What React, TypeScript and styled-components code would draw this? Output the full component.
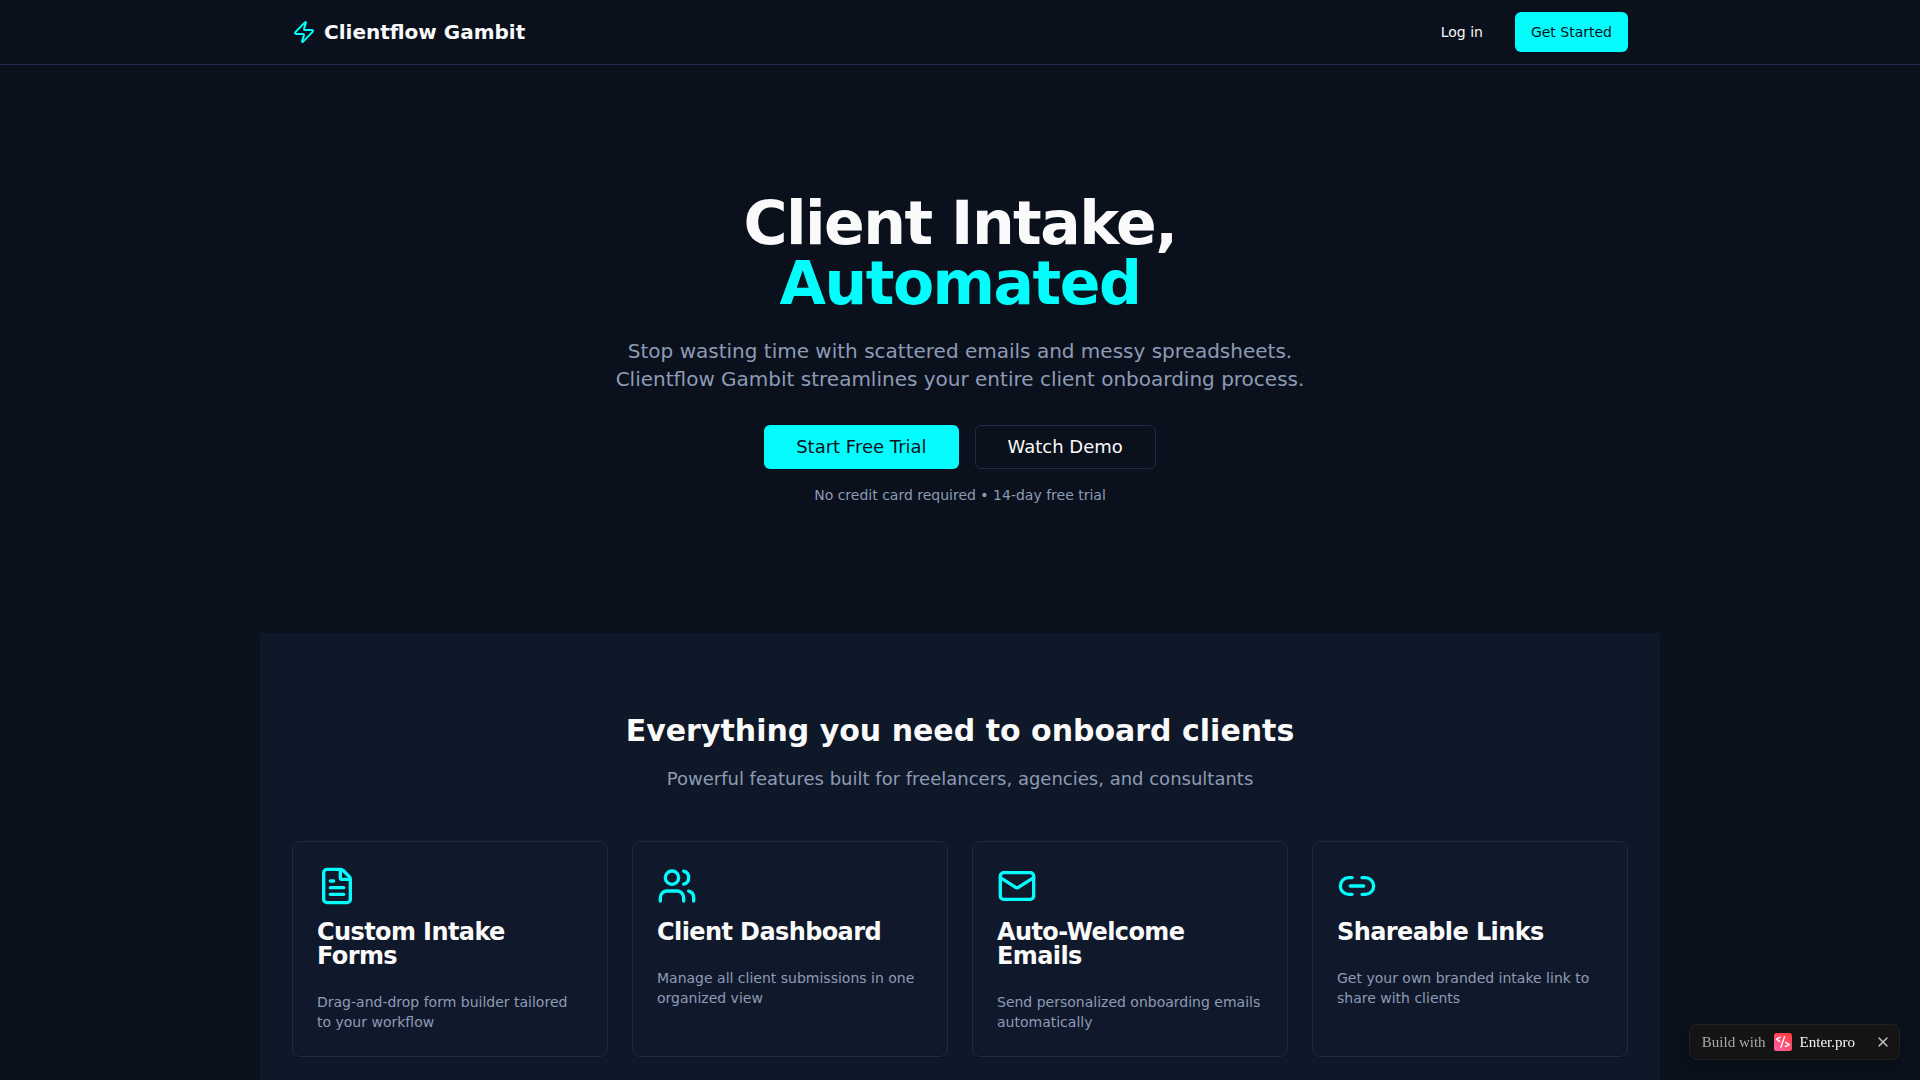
import React from "react";
import styled, { createGlobalStyle } from "styled-components";
import { Zap, FileText, Users, Mail, Link2, X } from "lucide-react";

const GlobalStyle = createGlobalStyle`
  *, *::before, *::after { box-sizing: border-box; }
  body {
    margin: 0;
    background: #0a111d;
    color: #fafafa;
    font-family: "DejaVu Sans", sans-serif;
    font-size: 16px;
    line-height: 24px;
    -webkit-font-smoothing: antialiased;
  }
  h1, h2, h3, p { margin: 0; }
`;

const Header = styled.header`
  border-bottom: 1px solid #1e2d4a;
`;

const Container = styled.div`
  max-width: 1400px;
  margin: 0 auto;
  padding: 0 32px;
`;

const Bar = styled(Container)`
  height: 64px;
  display: flex;
  align-items: center;
  justify-content: space-between;
`;

const Brand = styled.div`
  display: flex;
  align-items: center;
  gap: 8px;
  font-size: 20px;
  line-height: 28px;
  font-weight: 700;
  svg { color: #05fcfc; }
`;

const Actions = styled.nav`
  display: flex;
  align-items: center;
  gap: 16px;
`;

const Button = styled.button<{ $variant: "primary" | "ghost" | "outline"; $large?: boolean }>`
  height: ${(p) => (p.$large ? 44 : 40)}px;
  padding: 0 ${(p) => (p.$large ? 32 : 16)}px;
  font-family: inherit;
  font-size: ${(p) => (p.$large ? 18 : 14)}px;
  line-height: ${(p) => (p.$large ? 28 : 20)}px;
  font-weight: 500;
  border-radius: 6px;
  cursor: pointer;
  white-space: nowrap;
  border: ${(p) => (p.$variant === "outline" ? "1px solid #1e2b47" : "none")};
  background: ${(p) => (p.$variant === "primary" ? "#05fcfc" : "transparent")};
  color: ${(p) => (p.$variant === "primary" ? "#0a111d" : "#fafafa")};
`;

const Hero = styled(Container).attrs({ as: "section" })`
  padding-top: 128px;
  padding-bottom: 128px;
  text-align: center;
`;

const Title = styled.h1`
  font-size: 60px;
  line-height: 60px;
  font-weight: 700;
  letter-spacing: -0.025em;
  margin-bottom: 24px;
`;

const Accent = styled.span`
  display: block;
  color: #05fcfc;
`;

const Lead = styled.p`
  max-width: 720px;
  margin: 0 auto 32px;
  font-size: 20px;
  line-height: 28px;
  color: #8e9bb5;
`;

const HeroActions = styled.div`
  display: flex;
  justify-content: center;
  gap: 16px;
  margin-bottom: 16px;
`;

const Note = styled.p`
  font-size: 14px;
  line-height: 20px;
  color: #8e9bb5;
`;

const Features = styled(Container).attrs({ as: "section" })`
  padding-top: 80px;
  padding-bottom: 80px;
  background: #0f1828;
`;

const SectionHead = styled.div`
  text-align: center;
  margin-bottom: 48px;
`;

const SectionTitle = styled.h2`
  font-size: 30px;
  line-height: 36px;
  font-weight: 700;
  margin-bottom: 16px;
`;

const SectionText = styled.p`
  font-size: 18px;
  line-height: 28px;
  color: #8e9bb5;
`;

const Grid = styled.div`
  display: grid;
  grid-template-columns: repeat(4, minmax(0, 1fr));
  gap: 24px;
`;

const Card = styled.article`
  padding: 24px;
  border: 1px solid #1e2b47;
  border-radius: 8px;
  background: #10192b;
  box-shadow: 0 1px 2px rgba(0, 0, 0, 0.05);
  svg { display: block; color: #05fcfc; margin-bottom: 14px; }
`;

const CardTitle = styled.h3`
  font-size: 24px;
  line-height: 24px;
  font-weight: 600;
  letter-spacing: -0.025em;
  margin-bottom: 24px;
`;

const Badge = styled.aside`
  position: fixed;
  right: 20px;
  bottom: 20px;
  height: 36px;
  display: flex;
  align-items: center;
  gap: 8px;
  padding: 0 8px 0 12px;
  border: 1px solid #222222;
  border-radius: 8px;
  background: #141414;
  box-shadow: 0 4px 12px rgba(0, 0, 0, 0.2);
  color: #a8a8a8;
  font-family: "Liberation Serif", serif;
  font-size: 15px;
`;

const BadgeLink = styled.a`
  display: flex;
  align-items: center;
  gap: 8px;
  color: #f5f5f5;
  text-decoration: none;
`;

const Close = styled.button`
  display: flex;
  padding: 0;
  margin-left: 12px;
  border: 0;
  background: none;
  color: #c4c4c4;
  cursor: pointer;
`;

const EnterLogo = () => (
  <svg width="18" height="18" viewBox="0 0 18 18" fill="none" aria-hidden="true">
    <defs>
      <linearGradient id="enter-fill" x1="3" y1="18" x2="14" y2="0" gradientUnits="userSpaceOnUse">
        <stop stopColor="#ff5fa0" />
        <stop offset="1" stopColor="#ff3b3f" />
      </linearGradient>
    </defs>
    <rect width="18" height="18" rx="2.5" fill="url(#enter-fill)" />
    <path
      d="M6.2 4.2 2.4 6.2l3.5 2.4M10.6 3.6 7 14M11.6 9.3l3.8 2.4-4 1.8"
      stroke="#ffffff"
      strokeWidth="1.4"
      strokeLinecap="round"
      strokeLinejoin="round"
    />
  </svg>
);

const features = [
  { icon: FileText, title: "Custom Intake Forms", text: "Drag-and-drop form builder tailored to your workflow" },
  { icon: Users, title: "Client Dashboard", text: "Manage all client submissions in one organized view" },
  { icon: Mail, title: "Auto-Welcome Emails", text: "Send personalized onboarding emails automatically" },
  { icon: Link2, title: "Shareable Links", text: "Get your own branded intake link to share with clients" },
];

export default function App() {
  return (
    <>
      <GlobalStyle />
      <Header>
        <Bar>
          <Brand><Zap size={24} />Clientflow Gambit</Brand>
          <Actions>
            <Button $variant="ghost">Log in</Button>
            <Button $variant="primary">Get Started</Button>
          </Actions>
        </Bar>
      </Header>
      <main>
        <Hero>
          <Title>Client Intake,<Accent>Automated</Accent></Title>
          <Lead>
            Stop wasting time with scattered emails and messy spreadsheets. Clientflow Gambit
            streamlines your entire client onboarding process.
          </Lead>
          <HeroActions>
            <Button $variant="primary" $large>Start Free Trial</Button>
            <Button $variant="outline" $large>Watch Demo</Button>
          </HeroActions>
          <Note>No credit card required • 14-day free trial</Note>
        </Hero>
        <Features>
          <SectionHead>
            <SectionTitle>Everything you need to onboard clients</SectionTitle>
            <SectionText>Powerful features built for freelancers, agencies, and consultants</SectionText>
          </SectionHead>
          <Grid>
            {features.map(({ icon: Icon, title, text }) => (
              <Card key={title}>
                <Icon size={40} />
                <CardTitle>{title}</CardTitle>
                <Note>{text}</Note>
              </Card>
            ))}
          </Grid>
        </Features>
      </main>
      <Badge>
        Build with
        <BadgeLink href="#enter">
          <EnterLogo />
          Enter.pro
        </BadgeLink>
        <Close aria-label="Close"><X size={16} /></Close>
      </Badge>
    </>
  );
}
